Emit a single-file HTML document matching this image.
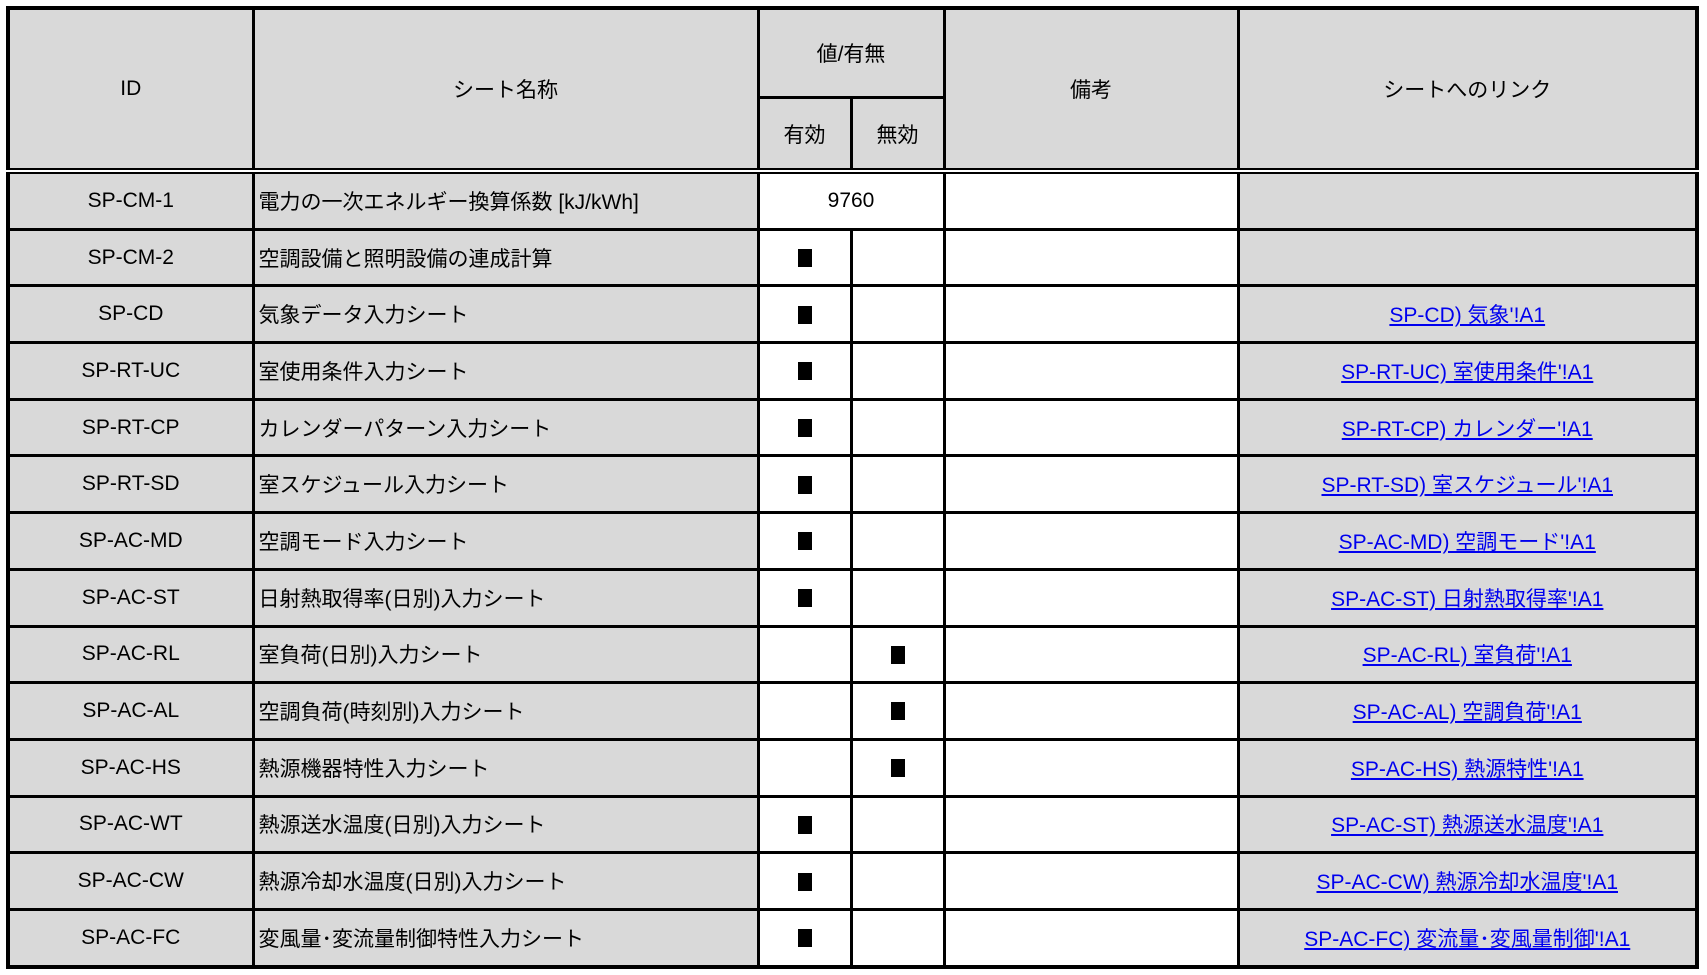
<!DOCTYPE html>
<html><head><meta charset="utf-8"><style>
body{margin:0;background:#fff;width:1707px;height:975px;overflow:hidden;font-family:"Liberation Sans","Noto Sans CJK JP",sans-serif;font-size:21px;color:#000}
table{position:absolute;left:6px;top:6px;border-collapse:collapse;table-layout:fixed;border:4px solid #000}
td{border:3px solid #000;padding:0;height:53.7px;text-align:center;background:#d9d9d9;white-space:nowrap;overflow:hidden}
td.n{text-align:left;padding-left:4px}
td.w{background:#fff}
tr.h td{height:86px}
tr.h2 td{height:69px}
.hb td{border-bottom:6px double #000}
a{color:#0000ee;text-decoration:underline}
.sq{display:inline-block;width:14px;height:18px;background:#000;vertical-align:middle}
</style></head><body>
<table>
<colgroup><col style="width:245px"><col style="width:505px"><col style="width:93px"><col style="width:93px"><col style="width:294px"><col style="width:459px"></colgroup>
<tr class="h"><td rowspan="2" style="border-bottom:6px double #000">ID</td><td rowspan="2" style="border-bottom:6px double #000">シート名称</td><td colspan="2">値/有無</td><td rowspan="2" style="border-bottom:6px double #000">備考</td><td rowspan="2" style="border-bottom:6px double #000">シートへのリンク</td></tr>
<tr class="h2 hb"><td>有効</td><td>無効</td></tr>
<tr><td>SP-CM-1</td><td class="n">電力の一次エネルギー換算係数 [kJ/kWh]</td><td colspan="2" class="w">9760</td><td class="w"></td><td></td></tr>
<tr><td>SP-CM-2</td><td class="n">空調設備と照明設備の連成計算</td><td class="w"><span class="sq"></span></td><td class="w"></td><td class="w"></td><td></td></tr>
<tr><td>SP-CD</td><td class="n">気象データ入力シート</td><td class="w"><span class="sq"></span></td><td class="w"></td><td class="w"></td><td><a>SP-CD) 気象'!A1</a></td></tr>
<tr><td>SP-RT-UC</td><td class="n">室使用条件入力シート</td><td class="w"><span class="sq"></span></td><td class="w"></td><td class="w"></td><td><a>SP-RT-UC) 室使用条件'!A1</a></td></tr>
<tr><td>SP-RT-CP</td><td class="n">カレンダーパターン入力シート</td><td class="w"><span class="sq"></span></td><td class="w"></td><td class="w"></td><td><a>SP-RT-CP) カレンダー'!A1</a></td></tr>
<tr><td>SP-RT-SD</td><td class="n">室スケジュール入力シート</td><td class="w"><span class="sq"></span></td><td class="w"></td><td class="w"></td><td><a>SP-RT-SD) 室スケジュール'!A1</a></td></tr>
<tr><td>SP-AC-MD</td><td class="n">空調モード入力シート</td><td class="w"><span class="sq"></span></td><td class="w"></td><td class="w"></td><td><a>SP-AC-MD) 空調モード'!A1</a></td></tr>
<tr><td>SP-AC-ST</td><td class="n">日射熱取得率(日別)入力シート</td><td class="w"><span class="sq"></span></td><td class="w"></td><td class="w"></td><td><a>SP-AC-ST) 日射熱取得率'!A1</a></td></tr>
<tr><td>SP-AC-RL</td><td class="n">室負荷(日別)入力シート</td><td class="w"></td><td class="w"><span class="sq"></span></td><td class="w"></td><td><a>SP-AC-RL) 室負荷'!A1</a></td></tr>
<tr><td>SP-AC-AL</td><td class="n">空調負荷(時刻別)入力シート</td><td class="w"></td><td class="w"><span class="sq"></span></td><td class="w"></td><td><a>SP-AC-AL) 空調負荷'!A1</a></td></tr>
<tr><td>SP-AC-HS</td><td class="n">熱源機器特性入力シート</td><td class="w"></td><td class="w"><span class="sq"></span></td><td class="w"></td><td><a>SP-AC-HS) 熱源特性'!A1</a></td></tr>
<tr><td>SP-AC-WT</td><td class="n">熱源送水温度(日別)入力シート</td><td class="w"><span class="sq"></span></td><td class="w"></td><td class="w"></td><td><a>SP-AC-ST) 熱源送水温度'!A1</a></td></tr>
<tr><td>SP-AC-CW</td><td class="n">熱源冷却水温度(日別)入力シート</td><td class="w"><span class="sq"></span></td><td class="w"></td><td class="w"></td><td><a>SP-AC-CW) 熱源冷却水温度'!A1</a></td></tr>
<tr><td>SP-AC-FC</td><td class="n">変風量･変流量制御特性入力シート</td><td class="w"><span class="sq"></span></td><td class="w"></td><td class="w"></td><td><a>SP-AC-FC) 変流量･変風量制御'!A1</a></td></tr>
</table>
</body></html>
